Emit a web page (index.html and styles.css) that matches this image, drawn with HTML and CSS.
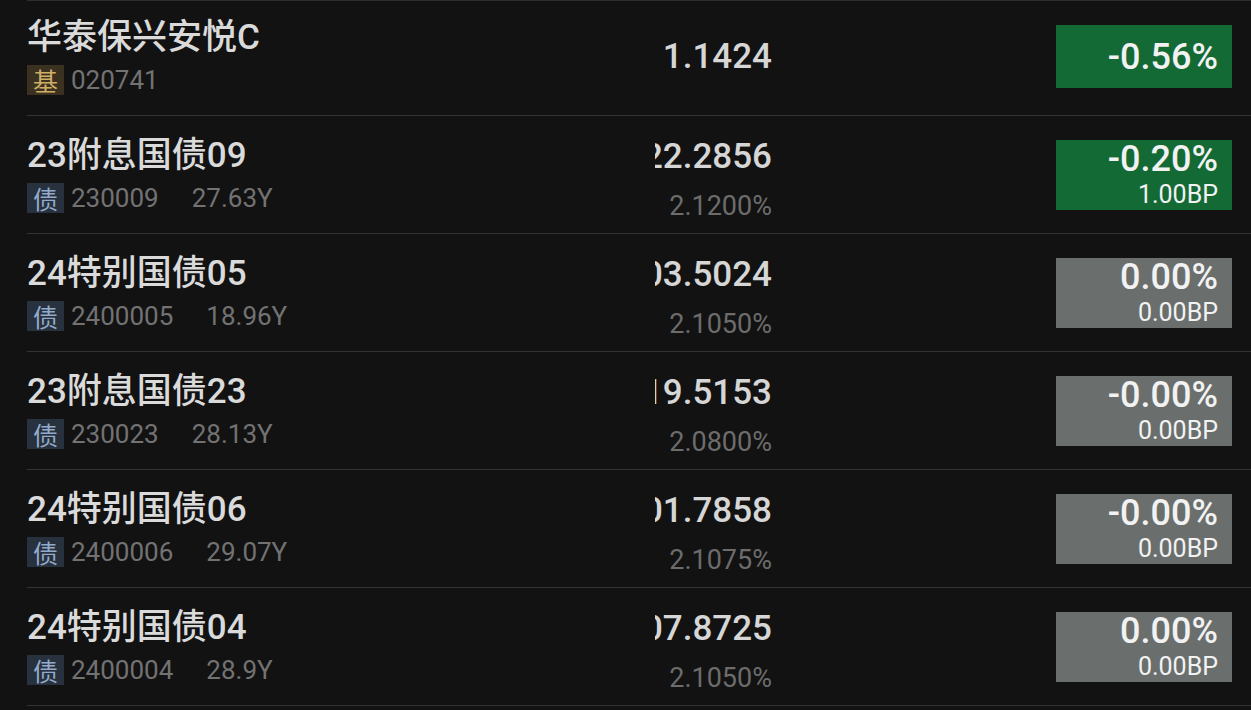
FILE: index.html
```html
<!DOCTYPE html>
<html lang="zh-CN">
<head>
<meta charset="utf-8">
<title>列表</title>
<link rel="stylesheet" href="styles.css">
</head>
<body>
<div class="top-edge"></div>
<div class="list">
  <div class="row">
    <div class="info">
      <div class="name">华泰保兴安悦C</div>
      <div class="meta"><span class="tag tag-fund">基</span><span class="code">020741</span></div>
    </div>
    <div class="price single"><div class="main">1.1424</div></div>
    <div class="chg up single"><div class="pct">-0.56%</div></div>
  </div>
  <div class="row">
    <div class="info">
      <div class="name">23附息国债09</div>
      <div class="meta"><span class="tag tag-bond">债</span><span class="code">230009</span><span class="term">27.63Y</span></div>
    </div>
    <div class="price"><div class="main">122.2856</div><div class="yield">2.1200%</div></div>
    <div class="chg up"><div class="pct">-0.20%</div><div class="bp">1.00BP</div></div>
  </div>
  <div class="row">
    <div class="info">
      <div class="name">24特别国债05</div>
      <div class="meta"><span class="tag tag-bond">债</span><span class="code">2400005</span><span class="term">18.96Y</span></div>
    </div>
    <div class="price"><div class="main">103.5024</div><div class="yield">2.1050%</div></div>
    <div class="chg flat"><div class="pct">0.00%</div><div class="bp">0.00BP</div></div>
  </div>
  <div class="row">
    <div class="info">
      <div class="name">23附息国债23</div>
      <div class="meta"><span class="tag tag-bond">债</span><span class="code">230023</span><span class="term">28.13Y</span></div>
    </div>
    <div class="price"><div class="main">119.5153</div><div class="yield">2.0800%</div></div>
    <div class="chg flat"><div class="pct">-0.00%</div><div class="bp">0.00BP</div></div>
  </div>
  <div class="row">
    <div class="info">
      <div class="name">24特别国债06</div>
      <div class="meta"><span class="tag tag-bond">债</span><span class="code">2400006</span><span class="term">29.07Y</span></div>
    </div>
    <div class="price"><div class="main">101.7858</div><div class="yield">2.1075%</div></div>
    <div class="chg flat"><div class="pct">-0.00%</div><div class="bp">0.00BP</div></div>
  </div>
  <div class="row">
    <div class="info">
      <div class="name">24特别国债04</div>
      <div class="meta"><span class="tag tag-bond">债</span><span class="code">2400004</span><span class="term">28.9Y</span></div>
    </div>
    <div class="price"><div class="main">107.8725</div><div class="yield">2.1050%</div></div>
    <div class="chg flat"><div class="pct">0.00%</div><div class="bp">0.00BP</div></div>
  </div>
</div>
</body>
</html>
```
FILE: styles.css
```css
html, body {
  margin: 0;
  padding: 0;
  background: #121212;
  height: 710px;
  overflow: hidden;
}
body {
  font-family: Roboto, "Noto Sans CJK SC", sans-serif;
  color: #d8d8d8;
}
.top-edge {
  height: 1px;
  margin-left: 27px;
  background: #2e2e2e;
}
.list {
  margin-top: -3px;
}
.row {
  display: flex;
  align-items: center;
  height: 117px;
  border-bottom: 1px solid #333333;
  margin-left: 27px;
  padding-right: 19px;
}
.info {
  flex: 1;
  align-self: flex-start;
  padding-top: 19px;
}
.name {
  font-size: 35px;
  line-height: 42px;
  font-weight: 500;
  color: #dadada;
  white-space: nowrap;
}
.meta {
  display: flex;
  align-items: center;
  height: 30px;
  margin-top: 6px;
  font-size: 26px;
  color: #727272;
}
.tag {
  display: flex;
  align-items: center;
  justify-content: center;
  width: 37px;
  height: 30px;
  font-family: "Noto Sans CJK SC", sans-serif;
  font-size: 25px;
  margin-right: 7px;
}
.tag-fund {
  background: #3a3121;
  color: #cfae66;
}
.tag-bond {
  background: #28313e;
  color: #93abcb;
}
.term {
  margin-left: 33px;
}
.price {
  width: 117px;
  display: flex;
  flex-direction: column;
  align-items: flex-end;
  overflow: hidden;
  align-self: flex-start;
  padding-top: 20px;
  margin-right: 284px;
}
.price.single {
  align-self: center;
  padding-top: 0;
}
.price .main {
  font-size: 35px;
  line-height: 42px;
  font-weight: 500;
  color: #d6d6d6;
  white-space: nowrap;
}
.price .yield {
  font-size: 27px;
  line-height: 30px;
  margin-top: 13px;
  color: #6c6c6c;
  white-space: nowrap;
}
.chg {
  width: 176px;
  height: 70px;
  box-sizing: border-box;
  padding: 0 14px;
  display: flex;
  flex-direction: column;
  justify-content: center;
  align-items: flex-end;
  color: #f2f2f2;
}
.chg.single {
  height: 63px;
}
.chg.up {
  background: #136a35;
}
.chg.flat {
  background: #6a6f6d;
}
.chg .pct {
  font-size: 36px;
  line-height: 36px;
  font-weight: 500;
}
.chg .bp {
  font-size: 25px;
  line-height: 28px;
  margin-top: 4px;
}
```
